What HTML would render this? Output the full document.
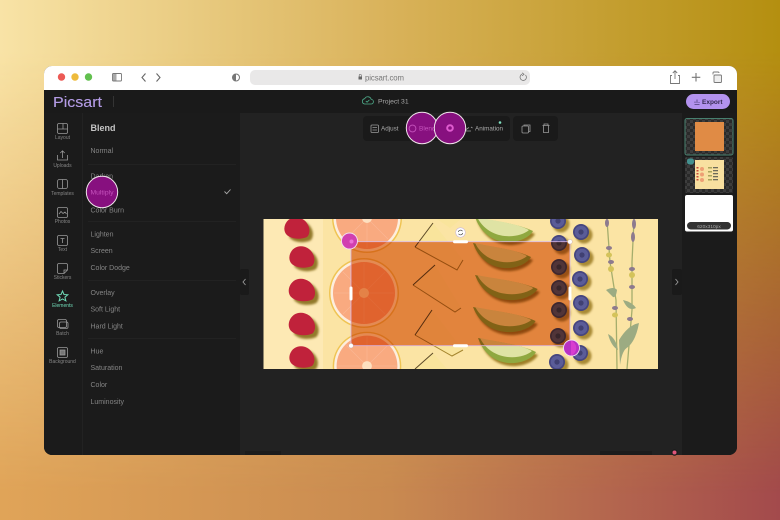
<!DOCTYPE html>
<html><head><meta charset="utf-8"><title>Picsart</title>
<style>html,body{margin:0;padding:0;background:#000;width:780px;height:520px;overflow:hidden}svg{display:block;filter:blur(.3px)}
text{font-family:"Liberation Sans",sans-serif}
.m{font-size:7px;fill:#858585}
.s{font-size:5px;fill:#858585;text-anchor:middle}
.ic{fill:none;stroke:#9a9a9a;stroke-width:.8}
</style></head><body>
<svg xmlns="http://www.w3.org/2000/svg" width="780" height="520" viewBox="0 0 780 520">
<defs>
<linearGradient id="bg" x1="0" y1="0" x2="1" y2="0"><stop offset="0" stop-color="#f8e3a6"/><stop offset=".5" stop-color="#d9b25a"/><stop offset="1" stop-color="#b48f10"/></linearGradient>
<linearGradient id="bgb" x1="0" y1="0" x2="1" y2="0"><stop offset="0" stop-color="#e0a458"/><stop offset=".5" stop-color="#c98a50"/><stop offset="1" stop-color="#a34a4c"/></linearGradient>
<linearGradient id="fade" x1="0" y1="0" x2="0" y2="1"><stop offset=".1" stop-color="#fff"/><stop offset=".95" stop-color="#000"/></linearGradient>
<mask id="fm"><rect width="780" height="520" fill="url(#fade)"/></mask>
<clipPath id="win"><rect x="44" y="66" width="693" height="389" rx="8"/></clipPath>
<clipPath id="art"><rect x="263.500" y="219" width="394.500" height="150"/></clipPath>
<pattern id="chk" width="6" height="6" patternUnits="userSpaceOnUse"><rect width="6" height="6" fill="#2a2a2a"/><rect width="3" height="3" fill="#3d3d3d"/><rect x="3" y="3" width="3" height="3" fill="#3d3d3d"/></pattern>
<filter id="soft" x="-5%" y="-5%" width="110%" height="110%"><feGaussianBlur stdDeviation=".3"/></filter>
<filter id="sh" x="-30%" y="-30%" width="160%" height="160%"><feGaussianBlur stdDeviation="1"/></filter>
<g id="berry"><circle cx="3" cy="3" r="8.500" fill="#a98a35" filter="url(#sh)"/><circle r="8" fill="#45457f"/><circle r="6.300" fill="#5a5b98"/><circle r="2.600" fill="#3f3f72"/></g>
<g id="straw"><path d="M-11,-3 C-9,-11 0,-13 7,-8 C13,-3 14,5 10,9 C3,12 -7,11 -11,6 Z" fill="#93792c" transform="translate(3.500,3.500)" filter="url(#sh)"/><path d="M-12,-3 C-9,-11 0,-13 7,-8 C13,-3 14,5 10,9 C3,12 -7,11 -11,6 C-13,3 -13,0 -12,-3 Z" fill="#c0203a"/></g>
<g id="fruit"><circle r="35" fill="#efc452"/><circle r="33.500" fill="#fdeedd"/><circle r="31" fill="#f9aa80"/><g stroke="#fab896" stroke-width=".6"><path d="M0,-30 V30 M-30,0 H30 M-21,-21 L21,21 M-21,21 L21,-21"/></g><circle r="5" fill="#fde0c0"/></g>
<g id="lime"><path d="M0,0 C17,4 42,6 58,14 C50,28 12,34 0,0 Z" fill="#9f7f26" transform="translate(2,3)" filter="url(#sh)"/><path d="M0,0 C17,4 42,6 58,14 C50,28 12,34 0,0 Z" fill="#8fa83f"/><path d="M2,0 C19,4 42,6 54,13 C44,22 14,24 2,0 Z" fill="#dfe3a4"/></g>
</defs>

<rect width="780" height="520" fill="url(#bgb)"/>
<rect width="780" height="520" fill="url(#bg)" mask="url(#fm)"/>

<g clip-path="url(#win)">
<rect x="44" y="66" width="693" height="389" fill="#222"/>
<!-- browser bar -->
<rect x="44" y="66" width="693" height="24" fill="#fff"/>
<circle cx="61.500" cy="77" r="3.700" fill="#ec5a55"/><circle cx="75" cy="77" r="3.700" fill="#eebb3c"/><circle cx="88.500" cy="77" r="3.700" fill="#62c04f"/>
<rect x="112.500" y="73.500" width="9" height="7.500" rx="1" fill="none" stroke="#777" stroke-width=".9"/><rect x="113" y="74" width="3.500" height="6.500" fill="#aaa"/>
<path d="M145.500,73.500 L142,77.500 L145.500,81.500 M156.500,73.500 L160,77.500 L156.500,81.500" fill="none" stroke="#666" stroke-width="1.100"/>
<circle cx="236" cy="77.500" r="3.500" fill="none" stroke="#777"/><path d="M236,74 A3.500,3.500 0 0 0 236,81 Z" fill="#777"/>
<rect x="250" y="70" width="280" height="15" rx="5" fill="#e9e8e8"/>
<rect x="358.500" y="76.500" width="3.500" height="3" fill="#666"/><path d="M359.200,76.500 V75.300 a1,1 0 0 1 2.100,0 V76.500" fill="none" stroke="#666" stroke-width=".6"/>
<text x="365" y="80.300" font-size="7.800" fill="#777" textLength="39">picsart.com</text>
<path d="M525.500,75 A3.200,3.200 0 1 1 522,74.300 M522,72.800 L524,74.300 L522,75.800" fill="none" stroke="#777" stroke-width=".8"/>
<path d="M672,75.500 H670.500 V83.500 H679.500 V75.500 H678 M675,79 V71 M672.800,73 L675,70.800 L677.200,73" fill="none" stroke="#777" stroke-width=".9"/>
<path d="M696,73 V81.500 M691.800,77.300 H700.300" stroke="#777" stroke-width="1.100"/>
<rect x="714" y="75" width="7.500" height="7.500" rx="1" fill="#eee" stroke="#777" stroke-width=".9"/><path d="M713,74.500 V73 a1,1 0 0 1 1,-1 H718 a1,1 0 0 1 1,1" fill="none" stroke="#777" stroke-width=".9"/>

<!-- app header -->
<rect x="44" y="90" width="693" height="23" fill="#1a1a1a"/>
<text x="53" y="107" font-size="15" fill="#b49ce6" stroke="#b49ce6" stroke-width=".12" textLength="49" lengthAdjust="spacingAndGlyphs">Picsart</text>
<rect x="113" y="96" width=".8" height="11" fill="#3a3a3a"/>
<path d="M364.500,104 h6.500 a2.300,2.300 0 0 0 .2,-4.600 a3.500,3.500 0 0 0 -6.500,-.7 a2.700,2.700 0 0 0 -.2,5.300 Z M365.800,101 l1.300,1.200 l2.300,-2.300" fill="none" stroke="#4fae8c" stroke-width=".8"/>
<text x="378" y="103.500" font-size="6.800" fill="#a8a8a8">Project 31</text>
<rect x="686" y="94" width="44" height="15" rx="7.500" fill="#b392ee"/>
<path d="M694.500,104.500 h5 M695,103 v-1.500 M697,103 v-3.500 M699,103 v-1" stroke="#4e3e78" stroke-width=".8" fill="none"/>
<text x="702" y="103.800" font-size="6.500" font-weight="bold" fill="#34294f">Export</text>

<!-- left sidebar -->
<rect x="44" y="113" width="38" height="342" fill="#1b1b1b"/>
<rect x="83" y="113" width="157" height="342" fill="#1b1b1b"/>
<g class="ic">
<rect x="57.500" y="123.500" width="10" height="10" rx="1.500"/><path d="M57.500,129 H67.500 M63,123.500 V129"/>
<path d="M57.500,155 V160 H67.500 V155 M62.500,158 V151 M60.300,153 L62.500,150.800 L64.700,153"/>
<rect x="57.500" y="179.500" width="10" height="9" rx="2"/><path d="M62.500,179.500 V188.500"/>
<rect x="57.500" y="207.500" width="10" height="10" rx="1.500"/><path d="M59,214 L61,211.500 L63,213.500 L65,212 L66.500,214"/>
<rect x="57.500" y="235.500" width="10" height="10" rx="1.500"/><path d="M60.500,238.500 H64.500 M62.500,238.500 V243"/>
<path d="M59,263.500 H66 a1.500,1.500 0 0 1 1.500,1.500 V270 L64,273.500 H59 a1.500,1.500 0 0 1 -1.500,-1.500 V265 a1.500,1.500 0 0 1 1.500,-1.500 Z M64,273.500 V270 H67.500"/>
<rect x="57.500" y="319.500" width="9" height="8" rx="1.500"/><rect x="59.500" y="322" width="8.500" height="6.500" rx="1.500"/>
<rect x="57.500" y="347.500" width="10" height="10" rx="1.500"/><rect x="60" y="350" width="5" height="5" fill="#777"/>
</g>
<path d="M62.500,291 L64,294.500 L67.800,294.800 L64.900,297.200 L65.900,300.900 L62.500,299 L59.100,300.900 L60.100,297.200 L57.200,294.800 L61,294.500 Z" fill="none" stroke="#6fd9b6" stroke-width="1"/>
<text x="62.500" y="139" class="s">Layout</text>
<text x="62.500" y="167" class="s">Uploads</text>
<text x="62.500" y="195" class="s">Templates</text>
<text x="62.500" y="223" class="s">Photos</text>
<text x="62.500" y="251" class="s">Text</text>
<text x="62.500" y="279" class="s">Stickers</text>
<text x="62.500" y="307" class="s" style="fill:#6fd9b6">Elements</text>
<text x="62.500" y="335" class="s">Batch</text>
<text x="62.500" y="363" class="s">Background</text>

<!-- panel -->
<text x="90.500" y="131" font-size="9" font-weight="bold" fill="#c4c4c4">Blend</text>
<text x="90.500" y="153" class="m">Normal</text>
<rect x="88" y="164" width="148" height=".7" fill="#262626"/>
<text x="90.500" y="178.500" class="m">Darken</text>
<text x="90.500" y="212.500" class="m">Color Burn</text>
<path d="M224.500,191.500 L226.700,193.700 L230.500,189.500" fill="none" stroke="#aaa" stroke-width=".9"/>
<rect x="88" y="221" width="148" height=".7" fill="#262626"/>
<text x="90.500" y="236.500" class="m">Lighten</text>
<text x="90.500" y="253" class="m">Screen</text>
<text x="90.500" y="270" class="m">Color Dodge</text>
<rect x="88" y="280" width="148" height=".7" fill="#262626"/>
<text x="90.500" y="295" class="m">Overlay</text>
<text x="90.500" y="311.500" class="m">Soft Light</text>
<text x="90.500" y="328.500" class="m">Hard Light</text>
<rect x="88" y="338" width="148" height=".7" fill="#262626"/>
<text x="90.500" y="353.500" class="m">Hue</text>
<text x="90.500" y="370" class="m">Saturation</text>
<text x="90.500" y="387" class="m">Color</text>
<text x="90.500" y="404" class="m">Luminosity</text>

<!-- collapse tabs -->
<rect x="240" y="269" width="9" height="26" rx="2" fill="#1a1a1a"/>
<path d="M245.500,279 L243,282 L245.500,285" fill="none" stroke="#999" stroke-width=".9"/>
<rect x="672" y="269" width="10" height="26" rx="2" fill="#1a1a1a"/>
<path d="M675.500,279 L678,282 L675.500,285" fill="none" stroke="#999" stroke-width=".9"/>

<!-- right panel -->
<rect x="682" y="113" width="55" height="342" fill="#1b1b1b"/>
<rect x="685" y="118.500" width="48" height="36.500" rx="2" fill="url(#chk)" stroke="#47806f"/>
<rect x="695" y="122" width="29" height="29" fill="#e08b45"/>
<rect x="685" y="157" width="48" height="36" rx="2" fill="url(#chk)"/>
<rect x="695" y="160" width="29" height="29" fill="#f8e0a0"/>
<g fill="#c84a3a"><rect x="696.500" y="167" width="2" height="1.500"/><rect x="696.500" y="170" width="2" height="1.500"/><rect x="696.500" y="173" width="2" height="1.500"/><rect x="696.500" y="176" width="2" height="1.500"/><rect x="696.500" y="179" width="2" height="1.500"/></g>
<circle cx="702" cy="169" r="2" fill="#ee9f74"/><circle cx="702" cy="174.500" r="2" fill="#ee9f74"/><circle cx="702" cy="180" r="2" fill="#ee9f74"/>
<g fill="#a9a45a"><rect x="708" y="167" width="4" height="1.500"/><rect x="708" y="171" width="4" height="1.500"/><rect x="708" y="175" width="4" height="1.500"/><rect x="708" y="179" width="4" height="1.500"/></g>
<g fill="#6c6a5a"><rect x="713" y="167" width="5" height="1.300"/><rect x="713" y="170" width="5" height="1.300"/><rect x="713" y="173" width="5" height="1.300"/><rect x="713" y="176" width="5" height="1.300"/><rect x="713" y="179" width="5" height="1.300"/></g>
<rect x="687" y="158.500" width="7" height="6" rx="2.500" fill="#43918f"/>
<rect x="685" y="195" width="48" height="36.500" rx="2" fill="#fff"/>
<rect x="687" y="222" width="44" height="7.500" rx="3.700" fill="#333"/>
<text x="709" y="227.800" font-size="4.800" fill="#aaa" text-anchor="middle">620x310px</text>

<!-- toolbar -->
<rect x="363" y="116" width="147" height="25" rx="4" fill="#1a1a1a"/>
<rect x="513" y="116" width="45" height="25" rx="4" fill="#1a1a1a"/>
<rect x="371" y="125" width="7.500" height="7.500" rx="1" class="ic"/><path d="M372.500,127.500 H377 M372.500,130 H377" class="ic"/>
<text x="381" y="130.500" font-size="6.300" fill="#aaa">Adjust</text>
<text x="475" y="130.500" font-size="6.300" fill="#aaa">Animation</text>
<path d="M466,131 H471 M466,131 V129.500 L469,127.500 M471,127 L472.500,128" class="ic"/>
<circle cx="500" cy="122.500" r="1.300" fill="#7fe0c0"/>
<rect x="522" y="126" width="6.500" height="7" rx="1" class="ic" style="fill:#1a1a1a"/><path d="M524,126 V125 H530 V131.500 H528.500" class="ic"/>
<path d="M542.500,125.500 H549.500 M544,125.500 V124 H548 V125.500 M543.500,125.500 V132.500 H548.500 V125.500" class="ic"/>

<!-- art -->
<g clip-path="url(#art)" filter="url(#soft)">
<rect x="263" y="219" width="395" height="150" fill="#fbe4a4"/>
<rect x="263" y="219" width="60" height="150" fill="#fde9b4"/>
<use href="#straw" transform="translate(297,228)"/>
<use href="#straw" transform="translate(302,257)"/>
<use href="#straw" transform="translate(302,290) scale(1.050)"/>
<use href="#straw" transform="translate(302,324) scale(1.050)"/>
<use href="#straw" transform="translate(302,357)"/>
<use href="#fruit" transform="translate(367,218)"/>
<use href="#fruit" transform="translate(364,293)"/>
<use href="#fruit" transform="translate(367,366) scale(.98)"/>
<!-- pineapple -->
<g fill="#f9e49c">
<path d="M437,219 L461,219 L450,228 Z"/>
<path d="M433,223 L463,260 L457,270 L415,247 Z"/>
<path d="M435,265 L461,308 L455,312 L413,285 Z"/>
<path d="M432,310 L463,350 L452,356 L415,335 Z"/>
<path d="M415,369 L433,353 L447,369 Z"/>
</g>
<g fill="none" stroke="#a5852e" stroke-width="1">
<path d="M463,260 L457,270 L415,247"/><path d="M461,308 L455,312 L413,285"/><path d="M463,350 L452,356 L415,335"/>
</g>
<g fill="none" stroke="#5c4a28" stroke-width="1">
<path d="M433,223 L415,247"/><path d="M435,265 L413,285"/><path d="M432,310 L415,335"/><path d="M415,369 L433,353"/>
</g>
<!-- limes -->
<use href="#lime" transform="translate(475,217)"/>
<use href="#lime" transform="translate(473,243)"/>
<use href="#lime" transform="translate(475,275) scale(1.080,1)"/>
<use href="#lime" transform="translate(473,307) scale(1.080,1)"/>
<use href="#lime" transform="translate(478,338)"/>
<!-- blueberries -->
<use href="#berry" x="558" y="221"/><use href="#berry" x="559" y="243"/><use href="#berry" x="559" y="267"/><use href="#berry" x="559" y="288"/><use href="#berry" x="559" y="310"/><use href="#berry" x="558" y="336"/><use href="#berry" x="557" y="362"/>
<use href="#berry" x="581" y="232"/><use href="#berry" x="582" y="255"/><use href="#berry" x="580" y="279"/><use href="#berry" x="581" y="303"/><use href="#berry" x="581" y="328"/><use href="#berry" x="580" y="353"/>
<!-- lavender -->
<path d="M607,220 L610,262 L616,300 L617,369 M634,220 L632,262 L632,310 L627,369" fill="none" stroke="#a5ad6c" stroke-width="1.300"/>
<g fill="#8d7a8e"><ellipse cx="607" cy="223" rx="2" ry="4"/><ellipse cx="634" cy="224" rx="2" ry="5"/><ellipse cx="633" cy="237" rx="2" ry="5"/><ellipse cx="609" cy="248" rx="3" ry="2"/><ellipse cx="611" cy="262" rx="3" ry="2"/><ellipse cx="632" cy="269" rx="3" ry="2"/><ellipse cx="632" cy="287" rx="3" ry="2"/><ellipse cx="615" cy="308" rx="3" ry="2"/><ellipse cx="630" cy="319" rx="3" ry="2"/></g>
<g fill="#d4c35a"><ellipse cx="609" cy="255" rx="3" ry="2.500"/><ellipse cx="611" cy="269" rx="3" ry="3"/><ellipse cx="632" cy="275" rx="3" ry="3"/><ellipse cx="615" cy="315" rx="3" ry="2.500"/></g>
<g fill="#9cab82"><path d="M606,290 Q614,286 617,290 Q616,298 613,297 Z"/><path d="M623,300 Q632,302 636,308 Q628,312 623,300 Z"/><path d="M608,334 Q616,338 618,350 Q611,346 608,334 Z"/><path d="M619,340 Q628,325 639,323 Q636,340 628,347 Q622,350 620,365 Z"/></g>
<!-- multiply selection -->
<rect x="351" y="241.700" width="219" height="104" fill="#e6945e" style="mix-blend-mode:multiply"/>
</g>

<!-- selection frame -->
<rect x="351" y="241.700" width="219" height="104" fill="none" stroke="#d9b8e8" stroke-width=".8"/>
<circle cx="570" cy="241.700" r="2.300" fill="#fff" stroke="#caa" stroke-width=".5"/>
<circle cx="351" cy="345.700" r="2.300" fill="#fff" stroke="#caa" stroke-width=".5"/>
<rect x="453" y="240.300" width="15" height="3" rx="1.500" fill="#fff"/>
<rect x="453" y="344.200" width="15" height="3" rx="1.500" fill="#fff"/>
<rect x="349.500" y="286.500" width="3" height="14" rx="1.500" fill="#fff"/>
<rect x="568.500" y="286.500" width="3" height="14" rx="1.500" fill="#fff"/>
<circle cx="460.500" cy="232.500" r="4.800" fill="#fff" stroke="#c9b8e0" stroke-width=".6"/>
<path d="M458.300,232 a2.300,2.300 0 0 1 4.200,-.8 M462.700,233 a2.300,2.300 0 0 1 -4.200,.8" fill="none" stroke="#555" stroke-width=".7"/>
<circle cx="349.500" cy="241" r="8" fill="#d13fb0" stroke="#f3e0f0" stroke-width=".9"/><circle cx="351.500" cy="241.500" r="2" fill="#ee70d8"/>
<circle cx="571.500" cy="348" r="8" fill="#b832c4" stroke="#f3e0f0" stroke-width=".9"/><path d="M571,340.500 A8,8 0 0 1 571,355.500 Z" fill="#d83ed0"/>

<!-- bottom bits -->
<rect x="245" y="451" width="36" height="4" fill="#1c1c1c"/>
<rect x="600" y="451" width="52" height="4" fill="#1c1c1c"/>
</g>
<circle cx="674.500" cy="452.500" r="3.200" fill="#1b1b1b"/><circle cx="674.500" cy="452.500" r="2" fill="#e0567a"/>

<!-- touch circles -->
<circle cx="102" cy="192" r="15.700" fill="#87107f" stroke="#efe3ea" stroke-width="1"/>
<text x="102" y="194.500" font-size="6.800" fill="#c553bd" text-anchor="middle">Multiply</text>
<circle cx="422" cy="128" r="15.700" fill="#87107f" stroke="#efe3ea" stroke-width="1"/>
<circle cx="412.500" cy="128.500" r="3.400" fill="none" stroke="#c553bd" stroke-width=".9"/>
<text x="419" y="130.500" font-size="6.500" fill="#c553bd">Blend</text>
<circle cx="450" cy="128" r="15.700" fill="#87107f" stroke="#efe3ea" stroke-width="1"/>
<circle cx="450" cy="128" r="2.800" fill="none" stroke="#e05cd0" stroke-width="2"/>
</svg>
</body></html>
